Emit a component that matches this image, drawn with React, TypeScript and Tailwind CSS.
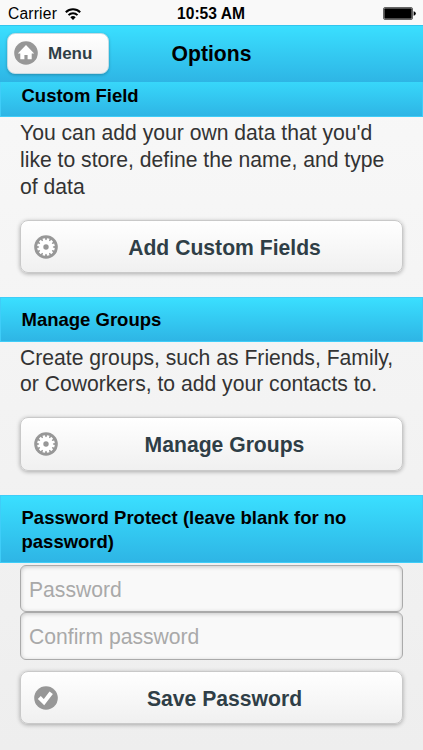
import React, { useState } from 'react';

type IconName = 'home' | 'gear' | 'check';

interface DiscIconProps {
  name: IconName;
}

const gearTeeth = [0, 30, 60, 90, 120, 150];

const DiscIcon: React.FC<DiscIconProps> = ({ name }) => (
  <svg viewBox="0 0 24 24" className="w-6 h-6 shrink-0" aria-hidden="true">
    <circle cx="12" cy="12" r="11.8" fill="#979797" />
    {name === 'home' && (
      <path d="M12 4 L3.8 12.4 H6.3 V18.3 H10.4 V14 H13.6 V18.3 H17.7 V12.4 H20.2 Z" fill="#fff" />
    )}
    {name === 'gear' && (
      <>
        <circle cx="12" cy="12" r="7" fill="#fff" />
        {gearTeeth.map((angle) => (
          <rect
            key={angle}
            x="10.7"
            y="3.2"
            width="2.6"
            height="17.6"
            fill="#fff"
            transform={`rotate(${angle + 15} 12 12)`}
          />
        ))}
        <circle cx="12" cy="12" r="2.7" fill="#979797" />
      </>
    )}
    {name === 'check' && (
      <path d="M5.3 11.6 L10 16.2 L17.2 6.8" fill="none" stroke="#fff" strokeWidth="4.2" />
    )}
  </svg>
);

const StatusBar: React.FC = () => (
  <div className="h-[25px] shrink-0 bg-[#f9f9f9] grid grid-cols-3 items-center pl-2 pr-[7px] pt-[3px] text-black">
    <div className="flex items-center gap-2">
      <span className="text-[15.6px] leading-5 tracking-[0.2px]">Carrier</span>
      <svg viewBox="0 0 16 12" className="w-4 h-3 mb-px" aria-hidden="true">
        <path d="M0.8 4.3 A10.2 10.2 0 0 1 15.2 4.3" fill="none" stroke="#000" strokeWidth="2" />
        <path d="M3.5 7.1 A6.4 6.4 0 0 1 12.5 7.1" fill="none" stroke="#000" strokeWidth="2" />
        <path d="M8 12 L5.3 9.2 A3.9 3.9 0 0 1 10.7 9.2 Z" fill="#000" />
      </svg>
    </div>
    <span className="pr-[2px] text-center text-[15.6px] leading-5 font-bold whitespace-nowrap">10:53 AM</span>
    <svg viewBox="0 0 33 13" className="w-[33px] h-[13px] mb-px justify-self-end" aria-hidden="true">
      <rect x="0.5" y="0.5" width="29" height="12" rx="1.5" fill="#999" stroke="#666" />
      <rect x="1.5" y="1.5" width="27" height="10" rx="0.7" fill="#000" />
      <path d="M30.6 4.3 Q32.8 4.6 32.8 6.5 Q32.8 8.4 30.6 8.7 Z" fill="#000" />
    </svg>
  </div>
);

const SectionBar: React.FC<{ children: React.ReactNode }> = ({ children }) => (
  <h2 className="border border-[#3fcdf8] bg-linear-to-b from-[#3adfff] to-[#2eb5e5] px-[20.5px] pt-[10px] pb-[8.7px] text-[18.5px] leading-[24px] font-bold text-black">
    {children}
  </h2>
);

const ActionButton: React.FC<{ icon: IconName; children: React.ReactNode }> = ({ icon, children }) => (
  <button
    type="button"
    className="flex items-center w-full h-[53.5px] px-[13px] pt-px rounded-lg border border-[#c9c9c9] bg-linear-to-b from-white to-[#f0f0f0] shadow-[0_1px_4px_rgba(0,0,0,0.3)] text-[21.15px] font-bold text-[#2f3e46]"
  >
    <DiscIcon name={icon} />
    <span className="flex-1 pl-[2px] pt-[2px] text-center">{children}</span>
  </button>
);

const inputStyles =
  'block w-full h-[47.3px] px-2 pt-[2px] rounded-md border border-[#aaa] bg-[#f9f9f9] shadow-[inset_0_1px_4px_rgba(0,0,0,0.2)] text-[21.15px] text-[#333] placeholder:text-[#a9a9a9] outline-none';

const App: React.FC = () => {
  const [password, setPassword] = useState('');
  const [confirmation, setConfirmation] = useState('');

  return (
    <div className="flex flex-col w-full h-[750px] overflow-hidden bg-linear-to-b from-[#f9f9f9] to-[#eee] font-['Liberation_Sans',Arial,sans-serif]">
      <StatusBar />

      <header className="h-[57px] shrink-0 grid grid-cols-[120px_1fr_120px] items-center border-t border-[#32c5ee] bg-linear-to-b from-[#3adfff] to-[#2eb5e5]">
        <button
          type="button"
          className="flex items-center gap-[10px] ml-[7px] mb-[2px] w-[102px] h-[41px] pl-[6px] rounded-lg border border-[#c6dce4] bg-linear-to-b from-white to-[#f0f0f0] shadow-[0_1px_3px_rgba(0,0,0,0.25)] text-[17px] font-bold text-[#2f3e46]"
        >
          <DiscIcon name="home" />
          <span className="pt-px">Menu</span>
        </button>
        <h1 className="text-center text-[21.15px] font-bold text-black">Options</h1>
      </header>

      <main className="flex-1 overflow-hidden">
        {/* the first bar is scrolled partly under the header */}
        <section className="-mt-[9.3px]">
          <SectionBar>Custom Field</SectionBar>
          <div className="px-5 pt-[3px] pb-6">
            <p className="mb-[19px] text-[21.15px] leading-[26.7px] text-[#333]">
              You can add your own data that you'd<br />
              like to store, define the name, and type<br />
              of data
            </p>
            <ActionButton icon="gear">Add Custom Fields</ActionButton>
          </div>
        </section>

        <section>
          <SectionBar>Manage Groups</SectionBar>
          <div className="px-5 pt-[3px] pb-6">
            <p className="mb-[19px] text-[21.15px] leading-[26.7px] text-[#333]">
              Create groups, such as Friends, Family,<br />
              or Coworkers, to add your contacts to.
            </p>
            <ActionButton icon="gear">Manage Groups</ActionButton>
          </div>
        </section>

        <section>
          <SectionBar>
            Password Protect (leave blank for no<br />
            password)
          </SectionBar>
          <form className="px-5 pt-[1.7px]" onSubmit={(e) => e.preventDefault()}>
            <input
              type="password"
              placeholder="Password"
              className={inputStyles}
              value={password}
              onChange={(e) => setPassword(e.target.value)}
            />
            <input
              type="password"
              placeholder="Confirm password"
              className={inputStyles}
              value={confirmation}
              onChange={(e) => setConfirmation(e.target.value)}
            />
            <div className="pt-[11.3px]">
              <ActionButton icon="check">Save Password</ActionButton>
            </div>
          </form>
        </section>
      </main>
    </div>
  );
};

export default App;
